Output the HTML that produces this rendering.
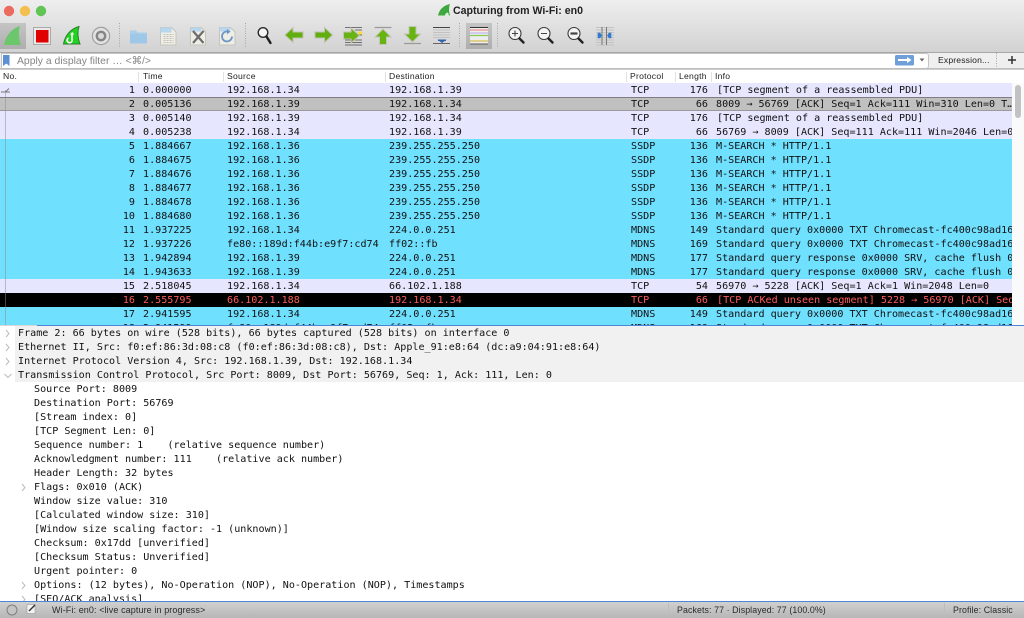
<!DOCTYPE html>
<html><head><meta charset="utf-8"><style>
html,body{margin:0;padding:0;width:1024px;height:618px;overflow:hidden;background:#fff}
#w{position:relative;width:1024px;height:618px;overflow:hidden;font-family:"DejaVu Sans Mono","Liberation Mono",monospace;font-size:10.08px;color:#111;filter:blur(.3px)}
.a{position:absolute}
#top{left:0;top:0;width:1024px;height:52px;background:linear-gradient(#eeeeee,#d2d2d2);border-bottom:1px solid #a8a8a8}
#title{left:453px;top:4px;font:bold 10.6px/14px "Liberation Sans",sans-serif;color:#222;white-space:nowrap}
#fb{left:0;top:53px;width:1024px;height:15px;background:#efefef}
#field{left:1px;top:53px;width:926px;height:14px;background:#fff;border:1px solid #c4c4c4;border-radius:0 3px 3px 0}
#hint{left:17px;top:54px;font:10.4px/15px "Liberation Sans",sans-serif;color:#858585;white-space:nowrap}
#exp{left:938px;top:53px;font:8.6px/15px "Liberation Sans",sans-serif;color:#222;letter-spacing:.15px}
#hl{left:0;top:68px;width:1024px;height:2px;background:linear-gradient(#b4b4b4,#d8d8d8)}
#hdr{left:0;top:70px;width:1024px;height:13px;background:#fff}
#hdr span{position:absolute;top:0;font:8.6px/13px "Liberation Sans",sans-serif;color:#222;letter-spacing:.25px}
#hdr i{position:absolute;top:2px;width:1px;height:10px;background:#e2e2e2}
#list{left:0;top:83px;width:1012px;height:242px;overflow:hidden}
.r{position:relative;height:14px;line-height:14px;white-space:nowrap;overflow:hidden;box-sizing:border-box}
.r b{font-weight:normal;position:absolute;top:1px}
.n{right:877px}.t{left:143px}.s{left:227px}.d{left:389px}.p{left:631px}.l{right:304px}.f{left:716px}
.T{background:#e7e6ff}.C{background:#70e0ff}.S{background:#c0c0c0;box-shadow:inset 0 1px #7e7e7e,inset 0 -1px #9a9a9a}.K{background:#000;color:#ff5c5c}
#rel{left:5px;top:90px;width:1px;height:235px;background:#8a8a8a;opacity:.5}
#sb{left:1012px;top:83px;width:12px;height:242px;background:#fafafa}
#th{left:1015px;top:85px;width:6px;height:33px;background:#c2c2c2;border-radius:3px}
#bl{left:37px;top:325px;width:987px;height:1px;background:#4d86d6}
#tree{left:0;top:326px;width:1024px;height:275px;overflow:hidden;background:#fff}
.e{position:absolute;left:0;width:1024px;height:14px;line-height:14px;white-space:pre}
.g{left:15px;width:1009px;background:#f1f1f1}
.e span{position:absolute;left:34px;top:1px}.g span{left:3px}
.e svg,.h{position:absolute}
#st{left:0;top:601px;width:1024px;height:17px;background:linear-gradient(#d0d0d0,#b6b6b6);border-top:1px solid #4d86d6;box-sizing:border-box;font:8.8px/17px "Liberation Sans",sans-serif;color:#2a2a2a;white-space:nowrap}
#st span{position:absolute;top:0;letter-spacing:.1px}
#st i{position:absolute;top:1px;width:1px;height:15px;background:#bcbcbc}
</style></head><body><div id="w">

<div class="a" id="top"></div>
<div class="a" id="title">Capturing from Wi-Fi: en0</div>

<svg class="a" style="left:0;top:0" width="1024" height="53" viewBox="0 0 1024 53">
<circle cx="9" cy="11" r="5.2" fill="#ed6a5e"/><circle cx="25" cy="11" r="5.2" fill="#f4bf4f"/><circle cx="41" cy="11" r="5.2" fill="#61c554"/>
<path d="M438 15.500C439 10 443 5.500 450 4C448.500 8 449 12 450 15.500Z" fill="#3da83d"/><path d="M445 15.500a3 3 0 0 1 3-3l1 3z" fill="#d8f0d8"/>

<defs><linearGradient id="pr" x1="0" y1="0" x2="0" y2="1"><stop offset="0" stop-color="#c4c4c4"/><stop offset="1" stop-color="#aeaeae"/></linearGradient></defs>
<rect x="0" y="23" width="26" height="26" fill="url(#pr)"/>
<path d="M4 45C5.500 36 11 29 20 26C18 33 19 39 21 45Z" fill="#6cc76c"/>

<rect x="33.500" y="27.500" width="17" height="17" fill="#eaeaea" stroke="#a9a9a9"/>
<rect x="36" y="30" width="12.500" height="12.500" fill="#e00000"/>

<path d="M63.500 44C65 36 70 29 79 26.500C77 33 78 39 80 44Z" fill="#1fd31f" stroke="#2e7d2e" stroke-width="1"/>
<path d="M72 33v6.500a2.500 2.500 0 1 1-3.500-1.500" fill="none" stroke="#fff" stroke-width="1.600"/><path d="M70 34.500l2.200-2.500 2.200 2.500z" fill="#fff"/>

<circle cx="101" cy="36" r="8.600" fill="#e2e2e2" stroke="#a0a0a0" stroke-width="1.200"/>
<circle cx="101" cy="36" r="4.200" fill="#dadada" stroke="#858585" stroke-width="2.400"/>

<g stroke="#a6a6a6" stroke-dasharray="1 1.500"><path d="M119.500 23V48M245.500 23V48M459.500 23V48M497.500 23V48"/></g>

<path d="M130 30.500h6l1.500 2h9.500V43.500H130Z" fill="#a9cfec"/><path d="M130 34h17v9.500H130Z" fill="#9fc8e8"/>

<path d="M160.500 27.500h11l4.500 4.500v13h-15.500Z" fill="#eeeee6" stroke="#c4c4bc"/><path d="M160.500 27.500h11v5h-11Z" fill="#b7d7ee"/>
<path d="M163.500 34.500h10M163.500 36.500h10M163.500 38.500h10M163.500 40.500h10M163.500 42.500h10" stroke="#c2c2b6" stroke-dasharray="2 1"/>

<path d="M190.500 27.500h10.500l4.500 4.500v13h-15Z" fill="#eeeee6" stroke="#c4c4bc"/><path d="M190.500 27.500h10.500v4h-10.500Z" fill="#b7d7ee"/>
<path d="M193 31L203.500 43M203.500 31L193 43" stroke="#6c6c6c" stroke-width="2.200"/>

<path d="M219.500 27.500h11l4.500 4.500v13h-15.500Z" fill="#eeeee6" stroke="#c4c4bc"/><path d="M219.500 27.500h11v4h-11Z" fill="#b7d7ee"/>
<path d="M232 36.500a5 5 0 1 1-3.500-4.800" fill="none" stroke="#6f95c7" stroke-width="1.800"/><path d="M227 29l3.500 2.800-3.500 2.500z" fill="#6f95c7"/>

<circle cx="263" cy="32.500" r="4.800" fill="#f4f4f4" stroke="#2a2a2a" stroke-width="1.400"/><path d="M266.500 36.500L270.500 43" stroke="#1e1e1e" stroke-width="2.400" stroke-linecap="round"/>

<path d="M285 35l8-7.500v4.500h10v6h-10v4.500Z" fill="#62ae0e" stroke="#c2c2b2" stroke-width="1"/>
<path d="M332.500 35l-8-7.500v4.500H315v6h9.500v4.500Z" fill="#62ae0e" stroke="#c2c2b2" stroke-width="1"/>

<g stroke="#444"><path d="M345 27.500h17M345 42.500h17M345 45h17M345 40h17M355 30h7M355 35h7" stroke-width="1" opacity=".7"/></g>
<path d="M343.500 32h7.500v-4l8.500 7.500-8.500 7.500v-4h-7.500Z" fill="#66b312" stroke="#c5c5b5"/><rect x="358" y="31.500" width="4.500" height="3" fill="#f2dc4a"/>

<path d="M374.500 27.500h17" stroke="#9a9a9a" stroke-width="1.200"/>
<path d="M383 29l8 8h-4.500v7.500h-7V37H375Z" fill="#66b312" stroke="#c5c5b5"/>
<path d="M404 43.500h17" stroke="#9a9a9a" stroke-width="1.200"/>
<path d="M412.500 42l-8-8h4.500v-7.500h7V34h4.500Z" fill="#66b312" stroke="#c5c5b5"/>

<path d="M433 27.500h17" stroke="#444"/><path d="M433 30h17M433 32.500h17M433 35h17M433 37.500h17" stroke="#c2c2c2"/><path d="M433 43.500h17" stroke="#666"/>
<path d="M437.500 39.500h9l-4.500 3.500Z" fill="#2f62a8"/><rect x="438" y="39.500" width="8" height="1.500" fill="#2f62a8"/>

<rect x="466" y="23" width="26" height="26" fill="url(#pr)"/>
<rect x="470" y="27" width="18" height="17.500" fill="#ededed"/>
<path d="M470 27.500h18" stroke="#333"/><path d="M470 30h18" stroke="#f0a0a0" stroke-width="1.400"/><path d="M470 33h18" stroke="#c4b8ee" stroke-width="1.200"/><path d="M470 35.500h18" stroke="#84cc58" stroke-width="1.200"/><path d="M470 41h18" stroke="#d6c050" stroke-width="1.200"/><path d="M470 44h18" stroke="#555"/>

<g fill="#f4f4f4" stroke="#3a3a3a" stroke-width="1.100"><circle cx="515" cy="33.500" r="6"/><circle cx="544" cy="33.500" r="6"/><circle cx="574" cy="33.500" r="6"/></g>
<g stroke="#222" stroke-width="2.400" stroke-linecap="round"><path d="M519.500 38.500L523.500 42.500M548.500 38.500L552.500 42.500M578.500 38.500L582.500 42.500"/></g>
<path d="M512 33.500h6M515 30.500v6M541 33.500h6" stroke="#444" stroke-width="1.100"/><path d="M570.500 33.500h7" stroke="#444" stroke-width="2.200"/>

<path d="M596 27.500h18M596 30h18M596 32.500h18M596 35h18M596 37.500h18M596 40h18M596 42.500h18M596 45h18" stroke="#c2c2c2" stroke-width=".9"/>
<path d="M602 27V45M606.500 27V45" stroke="#777" stroke-width="1"/>
<path d="M598 33h2l1.500 2.500-1.500 2.500h-2Z M611 33h-2l-1.500 2.500 1.500 2.500h2Z" fill="#2f7bd0" stroke="#2f7bd0" stroke-width=".6"/>
</svg>

<div class="a" id="fb"></div>
<div class="a" id="field"></div>
<svg class="a" style="left:0;top:53px" width="1024" height="15" viewBox="0 53 1024 15">
<path d="M3 55h6.500v11l-3.200-2.500L3 66Z" fill="#5b8fd0"/>
<rect x="895" y="55" width="19" height="10.500" rx="1.500" fill="#6f9fd8"/>
<path d="M898 59h9v-2l4.500 3-4.500 3v-2h-9Z" fill="#fff"/>
<path d="M919.500 58.500h5l-2.500 3Z" fill="#666"/>
<path d="M1008 60h8M1012 56v8" stroke="#333" stroke-width="1.500"/>
<path d="M996.500 53V68" stroke="#a6a6a6" stroke-dasharray="1 1.500"/>
</svg>
<div class="a" id="hint">Apply a display filter … &lt;⌘/&gt;</div>
<div class="a" id="exp">Expression...</div>
<div class="a" id="hl"></div>

<div class="a" id="hdr">
<span style="left:3px">No.</span><i style="left:138px"></i>
<span style="left:143px">Time</span><i style="left:223px"></i>
<span style="left:227px">Source</span><i style="left:385px"></i>
<span style="left:389px">Destination</span><i style="left:626px"></i>
<span style="left:630px">Protocol</span><i style="left:675px"></i>
<span style="left:679px">Length</span><i style="left:711px"></i>
<span style="left:715px">Info</span>
</div>

<div class="a" id="list">
<div class="r T"><b class="n">1</b><b class="t">0.000000</b><b class="s">192.168.1.34</b><b class="d">192.168.1.39</b><b class="p">TCP</b><b class="l">176</b><b class="f" style="left:717px">[TCP segment of a reassembled PDU]</b></div>
<div class="r S"><b class="n">2</b><b class="t">0.005136</b><b class="s">192.168.1.39</b><b class="d">192.168.1.34</b><b class="p">TCP</b><b class="l">66</b><b class="f">8009 → 56769 [ACK] Seq=1 Ack=111 Win=310 Len=0 T…</b></div>
<div class="r T"><b class="n">3</b><b class="t">0.005140</b><b class="s">192.168.1.39</b><b class="d">192.168.1.34</b><b class="p">TCP</b><b class="l">176</b><b class="f" style="left:717px">[TCP segment of a reassembled PDU]</b></div>
<div class="r T"><b class="n">4</b><b class="t">0.005238</b><b class="s">192.168.1.34</b><b class="d">192.168.1.39</b><b class="p">TCP</b><b class="l">66</b><b class="f">56769 → 8009 [ACK] Seq=111 Ack=111 Win=2046 Len=0</b></div>
<div class="r C"><b class="n">5</b><b class="t">1.884667</b><b class="s">192.168.1.36</b><b class="d">239.255.255.250</b><b class="p">SSDP</b><b class="l">136</b><b class="f">M-SEARCH * HTTP/1.1</b></div>
<div class="r C"><b class="n">6</b><b class="t">1.884675</b><b class="s">192.168.1.36</b><b class="d">239.255.255.250</b><b class="p">SSDP</b><b class="l">136</b><b class="f">M-SEARCH * HTTP/1.1</b></div>
<div class="r C"><b class="n">7</b><b class="t">1.884676</b><b class="s">192.168.1.36</b><b class="d">239.255.255.250</b><b class="p">SSDP</b><b class="l">136</b><b class="f">M-SEARCH * HTTP/1.1</b></div>
<div class="r C"><b class="n">8</b><b class="t">1.884677</b><b class="s">192.168.1.36</b><b class="d">239.255.255.250</b><b class="p">SSDP</b><b class="l">136</b><b class="f">M-SEARCH * HTTP/1.1</b></div>
<div class="r C"><b class="n">9</b><b class="t">1.884678</b><b class="s">192.168.1.36</b><b class="d">239.255.255.250</b><b class="p">SSDP</b><b class="l">136</b><b class="f">M-SEARCH * HTTP/1.1</b></div>
<div class="r C"><b class="n">10</b><b class="t">1.884680</b><b class="s">192.168.1.36</b><b class="d">239.255.255.250</b><b class="p">SSDP</b><b class="l">136</b><b class="f">M-SEARCH * HTTP/1.1</b></div>
<div class="r C"><b class="n">11</b><b class="t">1.937225</b><b class="s">192.168.1.34</b><b class="d">224.0.0.251</b><b class="p">MDNS</b><b class="l">149</b><b class="f">Standard query 0x0000 TXT Chromecast-fc400c98ad16</b></div>
<div class="r C"><b class="n">12</b><b class="t">1.937226</b><b class="s">fe80::189d:f44b:e9f7:cd74</b><b class="d">ff02::fb</b><b class="p">MDNS</b><b class="l">169</b><b class="f">Standard query 0x0000 TXT Chromecast-fc400c98ad16</b></div>
<div class="r C"><b class="n">13</b><b class="t">1.942894</b><b class="s">192.168.1.39</b><b class="d">224.0.0.251</b><b class="p">MDNS</b><b class="l">177</b><b class="f">Standard query response 0x0000 SRV, cache flush 0</b></div>
<div class="r C"><b class="n">14</b><b class="t">1.943633</b><b class="s">192.168.1.39</b><b class="d">224.0.0.251</b><b class="p">MDNS</b><b class="l">177</b><b class="f">Standard query response 0x0000 SRV, cache flush 0</b></div>
<div class="r T"><b class="n">15</b><b class="t">2.518045</b><b class="s">192.168.1.34</b><b class="d">66.102.1.188</b><b class="p">TCP</b><b class="l">54</b><b class="f">56970 → 5228 [ACK] Seq=1 Ack=1 Win=2048 Len=0</b></div>
<div class="r K"><b class="n">16</b><b class="t">2.555795</b><b class="s">66.102.1.188</b><b class="d">192.168.1.34</b><b class="p">TCP</b><b class="l">66</b><b class="f" style="left:717px">[TCP ACKed unseen segment] 5228 → 56970 [ACK] Seq</b></div>
<div class="r C"><b class="n">17</b><b class="t">2.941595</b><b class="s">192.168.1.34</b><b class="d">224.0.0.251</b><b class="p">MDNS</b><b class="l">149</b><b class="f">Standard query 0x0000 TXT Chromecast-fc400c98ad16</b></div>
<div class="r C"><b class="n">18</b><b class="t">2.941599</b><b class="s">fe80::189d:f44b:e9f7:cd74</b><b class="d">ff02::fb</b><b class="p">MDNS</b><b class="l">169</b><b class="f">Standard query 0x0000 TXT Chromecast-fc400c98ad16</b></div>
</div>
<div class="a" id="rel"></div>
<svg class="a" style="left:0;top:86px" width="12" height="10"><path d="M1 6h9M5.500 6L9 2.500" stroke="#777" fill="none" stroke-width=".9"/></svg>
<div class="a" id="sb"></div><div class="a" id="th"></div>
<div class="a" style="left:0;top:325px;width:37px;height:1px;background:#d8d8d8"></div>
<div class="a" id="bl"></div>

<div class="a" id="tree">
<div class="e g" style="top:0"><span>Frame 2: 66 bytes on wire (528 bits), 66 bytes captured (528 bits) on interface 0</span></div>
<div class="e g" style="top:14px"><span>Ethernet II, Src: f0:ef:86:3d:08:c8 (f0:ef:86:3d:08:c8), Dst: Apple_91:e8:64 (dc:a9:04:91:e8:64)</span></div>
<div class="e g" style="top:28px"><span>Internet Protocol Version 4, Src: 192.168.1.39, Dst: 192.168.1.34</span></div>
<div class="e g" style="top:42px"><span>Transmission Control Protocol, Src Port: 8009, Dst Port: 56769, Seq: 1, Ack: 111, Len: 0</span></div>
<div class="e" style="top:56px"><span>Source Port: 8009</span></div>
<div class="e" style="top:70px"><span>Destination Port: 56769</span></div>
<div class="e" style="top:84px"><span>[Stream index: 0]</span></div>
<div class="e" style="top:98px"><span>[TCP Segment Len: 0]</span></div>
<div class="e" style="top:112px"><span>Sequence number: 1    (relative sequence number)</span></div>
<div class="e" style="top:126px"><span>Acknowledgment number: 111    (relative ack number)</span></div>
<div class="e" style="top:140px"><span>Header Length: 32 bytes</span></div>
<div class="e" style="top:154px"><span>Flags: 0x010 (ACK)</span></div>
<div class="e" style="top:168px"><span>Window size value: 310</span></div>
<div class="e" style="top:182px"><span>[Calculated window size: 310]</span></div>
<div class="e" style="top:196px"><span>[Window size scaling factor: -1 (unknown)]</span></div>
<div class="e" style="top:210px"><span>Checksum: 0x17dd [unverified]</span></div>
<div class="e" style="top:224px"><span>[Checksum Status: Unverified]</span></div>
<div class="e" style="top:238px"><span>Urgent pointer: 0</span></div>
<div class="e" style="top:252px"><span>Options: (12 bytes), No-Operation (NOP), No-Operation (NOP), Timestamps</span></div>
<div class="e" style="top:266px"><span>[SEQ/ACK analysis]</span></div>
<svg class="h" style="left:0;top:0" width="30" height="275" fill="none" stroke="#bcbcbc" stroke-width="1">
<path d="M6 4l3 3.500-3 3.500M6 18l3 3.500-3 3.500M6 32l3 3.500-3 3.500M4.500 48l3.500 3.500 3.500-3.500M22 158l3 3.500-3 3.500M22 256l3 3.500-3 3.500M22 270l3 3.500-3 3.500"/>
</svg>
</div>

<div class="a" id="st">
<svg style="position:absolute;left:0;top:0" width="40" height="15"><circle cx="12" cy="8" r="5" fill="#c4c4c4" stroke="#7f7f7f"/><rect x="27" y="2.500" width="8" height="9" fill="#f2f2f2" stroke="#999" stroke-width=".6"/><path d="M29 9l6-6" stroke="#333" stroke-width="1.400"/></svg>
<span style="left:52px;font-size:9px">Wi-Fi: en0: &lt;live capture in progress&gt;</span>
<i style="left:668px"></i><span style="left:677px">Packets: 77 · Displayed: 77 (100.0%)</span>
<i style="left:944px"></i><span style="left:953px">Profile: Classic</span>
</div>

</div></body></html>
